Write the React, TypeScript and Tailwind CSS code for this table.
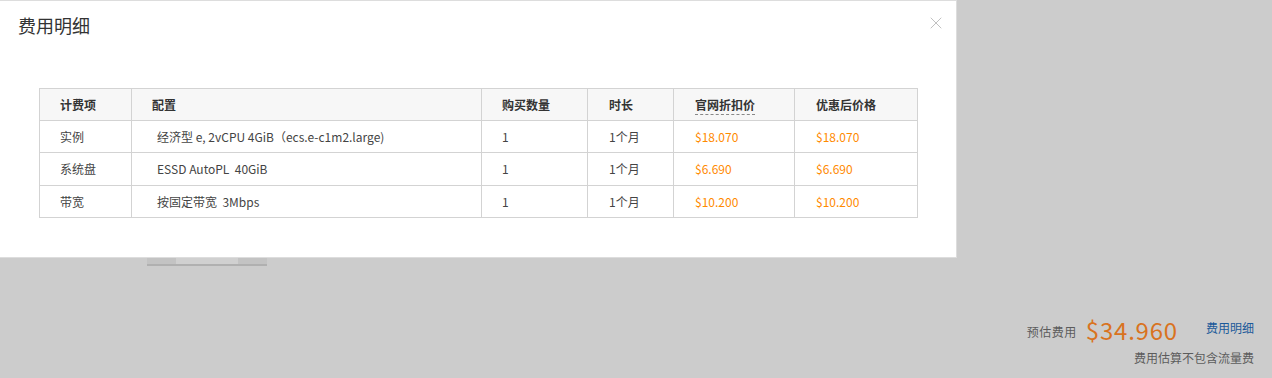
import { X } from 'lucide-react';

const rows = [
  { item: '实例', config: '经济型 e, 2vCPU 4GiB（ecs.e-c1m2.large)', qty: '1', period: '1个月', list: '$18.070', final: '$18.070', h: 'h-[32px]' },
  { item: '系统盘', config: 'ESSD AutoPL  40GiB', qty: '1', period: '1个月', list: '$6.690', final: '$6.690', h: 'h-[33px]' },
  { item: '带宽', config: '按固定带宽  3Mbps', qty: '1', period: '1个月', list: '$10.200', final: '$10.200', h: 'h-[32px]' },
];

const font = "font-['Noto_Sans_CJK_SC','Liberation_Sans',sans-serif]";

export default function App() {
  return (
    <div className={`relative w-[1272px] h-[378px] overflow-hidden bg-[#cccccc] ${font}`}>
      {/* page underneath the mask */}
      <div className="pt-[258px] pl-[147px]">
        <div className="flex w-[120px] h-[8px] border-b-2 border-[#b0b0b0]">
          <div className="w-[29px] bg-[#c3c3c3]" />
          <div className="flex-1 bg-[#d0d0d0]" />
          <div className="w-[29px] bg-[#c3c3c3]" />
        </div>
      </div>

      <div className="absolute right-[18px] top-[316px] flex flex-col items-end">
        <div className="flex items-center">
          <span className="text-[12px] text-[#5c5c5c] mt-[3px] tracking-[0.5px]">预估费用</span>
          <span className="ml-[9px] text-[24px] leading-[28px] text-[#d9731f] tracking-[0.8px]">$34.960</span>
          <span className="ml-[28px] text-[12px] text-[#1b5a9a] mt-[-4px]">费用明细</span>
        </div>
        <span className="mt-[5px] text-[12px] text-[#5c5c5c]">费用估算不包含流量费</span>
      </div>

      {/* dialog */}
      <div className="absolute left-0 top-0 w-[957px] h-[258px] bg-white border border-[#dddddd] border-l-0">
        <div className="flex items-start justify-between pl-[18px] pr-[10px] pt-[11px]">
          <h3 className="text-[18px] leading-[26px] text-[#333333]">费用明细</h3>
          <X className="w-[20px] h-[20px] mt-[1px] text-[#bbbbbb]" strokeWidth={1.1} />
        </div>
        <div className="pl-[39px] pt-[50px]">
          <table className="w-[878px] border-collapse text-[12px] text-[#333333] table-fixed">
            <colgroup>
              <col className="w-[92px]" />
              <col className="w-[350px]" />
              <col className="w-[106px]" />
              <col className="w-[86px]" />
              <col className="w-[121px]" />
              <col className="w-[123px]" />
            </colgroup>
            <thead>
              <tr className="bg-[#f7f7f7] h-[32px] text-left">
                <th className="border border-[#d3d3d3] pl-[20px] font-semibold">计费项</th>
                <th className="border border-[#d3d3d3] pl-[20px] font-semibold">配置</th>
                <th className="border border-[#d3d3d3] pl-[20px] font-semibold">购买数量</th>
                <th className="border border-[#d3d3d3] pl-[21px] font-semibold">时长</th>
                <th className="border border-[#d3d3d3] pl-[21px] font-semibold">
                  <span className="border-b border-dashed border-[#888888] pb-[1px]">官网折扣价</span>
                </th>
                <th className="border border-[#d3d3d3] pl-[21px] font-semibold">优惠后价格</th>
              </tr>
            </thead>
            <tbody>
              {rows.map((r) => (
                <tr key={r.item} className={`${r.h} text-[#444444]`}>
                  <td className="border border-[#d3d3d3] pl-[20px]">{r.item}</td>
                  <td className="border border-[#d3d3d3] pl-[25px] whitespace-pre">{r.config}</td>
                  <td className="border border-[#d3d3d3] pl-[20px]">{r.qty}</td>
                  <td className="border border-[#d3d3d3] pl-[21px]">{r.period}</td>
                  <td className="border border-[#d3d3d3] pl-[21px] text-[#ff8a00]">{r.list}</td>
                  <td className="border border-[#d3d3d3] pl-[21px] text-[#ff8a00]">{r.final}</td>
                </tr>
              ))}
            </tbody>
          </table>
        </div>
      </div>
    </div>
  );
}
